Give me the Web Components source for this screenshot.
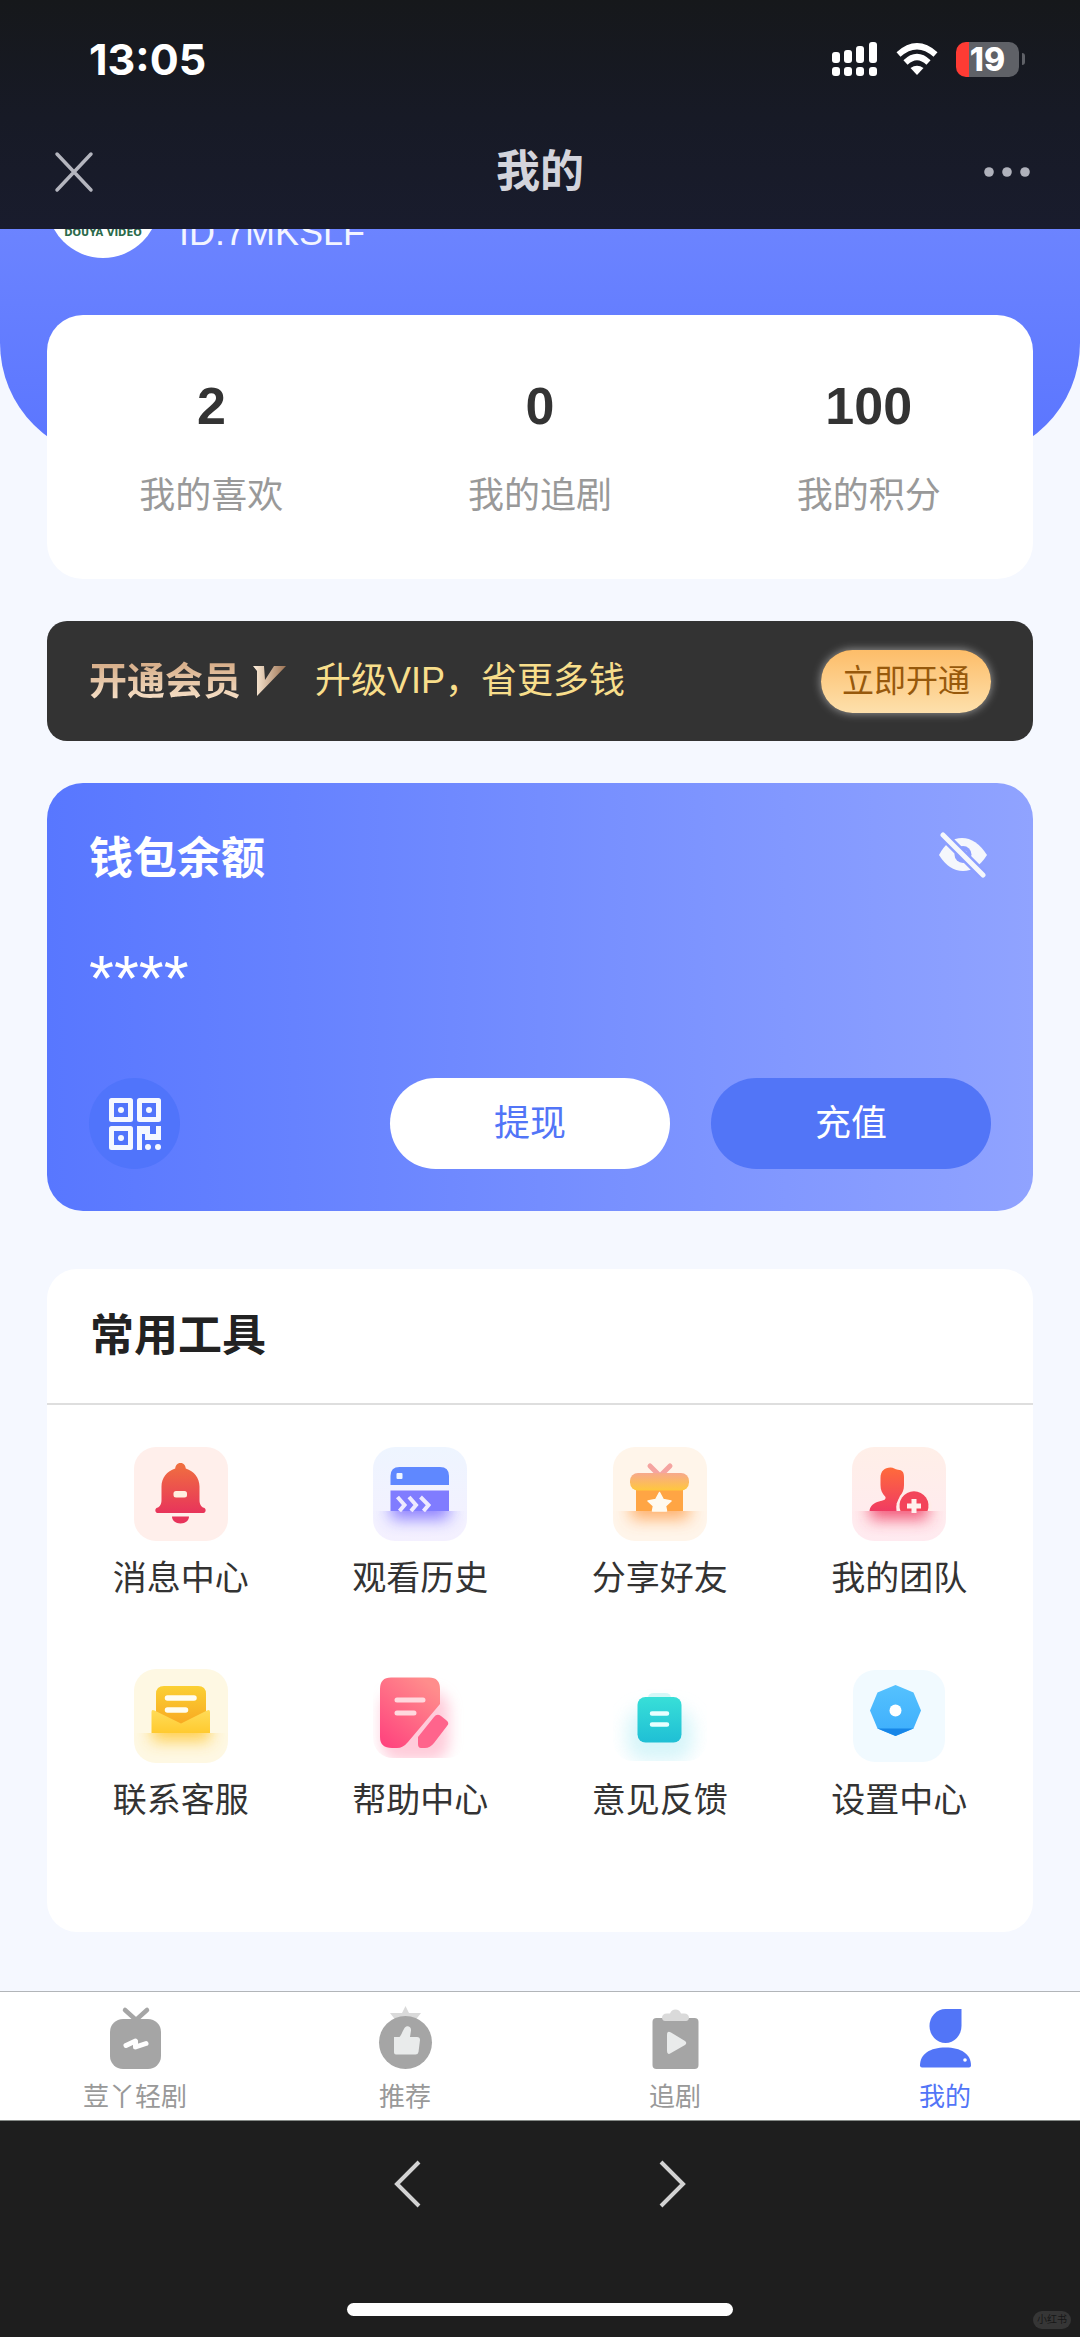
<!DOCTYPE html>
<html lang="zh-CN">
<head>
<meta charset="utf-8">
<meta name="viewport" content="width=device-width, initial-scale=1">
<title>我的</title>
<style>
  body {
    margin: 0;
    min-height: 100vh;
    display: flex;
    flex-direction: column;
    background: #f5f8ff;
    font-family: "Liberation Sans", "Noto Sans CJK SC", sans-serif;
    color: #333;
  }
  main {
    overflow: hidden;
    display: flex;
    flex-direction: column;
    padding-bottom: 59px;
  }
  .cards {
    display: flex;
    flex-direction: column;
    gap: 42px;
    margin: -144px 47px 0;
  }
  app-tools { margin-top: 16px; }
  app-footer { flex: 1; }
</style>
</head>
<body>
<status-bar time="13:05" battery="19"></status-bar>
<nav-header>我的</nav-header>
<main>
  <user-hero brand="DOUYA VIDEO">ID:7MKSLF</user-hero>
  <div class="cards">
    <stat-card>
      <stat-item value="2">我的喜欢</stat-item>
      <stat-item value="0">我的追剧</stat-item>
      <stat-item value="100">我的积分</stat-item>
    </stat-card>
    <vip-banner heading="开通会员" action="立即开通">升级VIP，省更多钱</vip-banner>
    <wallet-card heading="钱包余额" amount="****"></wallet-card>
    <app-tools heading="常用工具">
      <tool-item icon="bell">消息中心</tool-item>
      <tool-item icon="history">观看历史</tool-item>
      <tool-item icon="gift">分享好友</tool-item>
      <tool-item icon="team">我的团队</tool-item>
      <tool-item icon="contact">联系客服</tool-item>
      <tool-item icon="help">帮助中心</tool-item>
      <tool-item icon="feedback">意见反馈</tool-item>
      <tool-item icon="settings">设置中心</tool-item>
    </app-tools>
  </div>
</main>
<tab-bar>
  <tab-item icon="tv">荳丫轻剧</tab-item>
  <tab-item icon="like">推荐</tab-item>
  <tab-item icon="play">追剧</tab-item>
  <tab-item icon="me" active>我的</tab-item>
</tab-bar>
<app-footer badge="小红书"></app-footer>

<script>
const define = (name, render) => customElements.define(name, class extends HTMLElement {
  constructor() {
    super();
    const root = this.attachShadow({ mode: 'open' });
    const t = document.createElement('template');
    t.innerHTML = '<style>:host,*{box-sizing:border-box}svg{display:block;flex:none}button{border:0;padding:0;margin:0;background:none;font:inherit;color:inherit}a{color:inherit;text-decoration:none}</style>' + render(n => this.getAttribute(n) || '');
    root.append(t.content.cloneNode(true));
  }
});

const lin = (id, a, b, dir = 'x2="0" y2="1"') =>
  `<linearGradient id="${id}" ${dir}><stop stop-color="${a}"/><stop offset="1" stop-color="${b}"/></linearGradient>`;
const tile = c => `<rect width="94" height="94" rx="22" fill="${c}"/>`;
/* soft glow cast on the lower part of a tile, below the cut line at y=64 */
const glow = c => `<clipPath id="low"><path d="M0 64H94V72A22 22 0 0 1 72 94H22A22 22 0 0 1 0 72Z"/></clipPath>
  <filter id="soft" x="-50%" y="-80%" width="200%" height="260%"><feGaussianBlur stdDeviation="8"/></filter>
  <g clip-path="url(#low)"><rect x="18" y="48" width="58" height="24" fill="${c}" opacity=".85" filter="url(#soft)"/></g>`;

const toolIcons = {
  bell: `${lin('g', '#f0703f', '#e8345b')}${tile('#ffefeb')}
    <g fill="url(#g)"><path d="M46.500 16c3.500 0 5 2.500 5.300 5.500C60 24 65.500 31 65.500 39.500V53c0 4 1.500 7 4.500 7.800 2.500.8 2 5.200-.5 5.200h-46c-2.500 0-3-4.400-.5-5.200 3-.8 4.500-3.800 4.500-7.800V39.500C27.500 31 33 24 41.200 21.500 41.500 18.500 43 16 46.500 16Z"/></g>
    <path d="M38 69.500h17c0 4-3.500 7-8.500 7s-8.500-3-8.500-7Z" fill="#e8345b"/><rect x="39.500" y="44" width="13.500" height="6.500" rx="2.500" fill="#ffefdf"/>`,
  history: `${lin('g', '#eef5ff', '#f4f0ff')}${tile('url(#g)')}${glow('#7b6cff')}
    <path d="M17.500 38V29q0-9 9-9H67q9 0 9 9v9Z" fill="#5f88ff"/><path d="M17.500 43.500H76V64H17.500Z" fill="#807cff"/>
    <rect x="23.500" y="26" width="6" height="6" rx="1" fill="#eef5ff"/>
    <g fill="none" stroke="#eeeaff" stroke-width="4"><path d="M24.500 50l7 8-5 6M36 50l7 8-5 6M47.500 50l8 8-5 6"/></g>`,
  gift: `${lin('g', '#f7a98c', '#ffc83c')}${tile('#fff5ea')}${glow('#ffa352')}
    <path d="M37 19l9 9M57 19l-9 9" stroke="#f5a4a0" stroke-width="5" stroke-linecap="round"/>
    <path d="M23 40H70V64H23Z" fill="#ffa544"/><rect x="17" y="26" width="59" height="17.500" rx="8" fill="url(#g)"/>
    <path d="M46.500 45.500l3.800 7 7.700 1.500-5.500 5 1 5H39.500l1-5L35 54l7.700-1.500Z" fill="#fffaf0" stroke="#fffaf0" stroke-width="1.500" stroke-linejoin="round"/>`,
  team: `${lin('g', '#ff6b3b', '#f03b62')}${lin('b', '#ffefe8', '#ffeaf0')}${tile('url(#b)')}${glow('#f03b62')}
    <path d="M28.500 31c0-7 4-10.500 10-10.500 3 0 4.500 2.200 7.500 2.200 4.500 0 6 3 6 7.300v8c0 5-1.500 8-4 11-1.200 3 0 4.500 4 6L58 64H17.500c.5-5.500 4.500-8 9.500-9.500 4.500-1.300 7-1.500 6.500-4.500C30 46 28.500 43 28.500 38Z" fill="url(#g)"/>
    <path d="M44.500 64a17.800 17.800 0 1 1 35 0Z" fill="#ffece9"/><path d="M48.500 64a14.500 14.500 0 1 1 27 0Z" fill="#f3445a"/><path d="M62 52v14M55 59h14" stroke="#fff0ed" stroke-width="5"/>`,
  contact: `${lin('g', '#fbd034', '#f7a01d')}${lin('e', '#ffdc58', '#ffca2f')}${tile('#fef8e3')}${glow('#ffc736')}
    <path d="M22 64V25q0-8 8-8H64q8 0 8 8V64Z" fill="url(#g)"/>
    <path d="M17.500 43q0-3 3-1.500L47 54.500 73 41.500q3-1.500 3 1.500V64H17.500Z" fill="url(#e)"/>
    <path d="M33.500 29H60M33.500 41H51.500" stroke="#fffdf0" stroke-width="5.500" stroke-linecap="round"/>`,
  help: `${lin('g', '#ff8d8c', '#ff3f7d', 'x1=".7" y1="0" x2="0" y2="1"')}<filter id="s" x="-30%" y="-30%" width="160%" height="160%"><feGaussianBlur stdDeviation="7"/></filter>
    <clipPath id="c"><rect width="94" height="89" rx="20"/></clipPath><g clip-path="url(#c)"><rect x="8" y="22" width="68" height="70" rx="18" fill="#ffb6ca" opacity=".7" filter="url(#s)"/></g>
    <path d="M7 20Q7 8.500 18 8.500H56Q67 8.500 67 20V35L35 73Q30 79 24 79H19Q7 79 7 68Z" fill="url(#g)"/>
    <path d="M61 48q3-4 7-1l5 4q4 3 1 6L61 74q-4 5-9 5h-4q-3 0-3-4v-7Z" fill="#ff648c"/>
    <path d="M24 31H50M24 44H41" stroke="#ffd9de" stroke-width="5" stroke-linecap="round"/>`,
  feedback: `${lin('g', '#38dfd8', '#1fbfd5')}<filter id="s" x="-40%" y="-40%" width="180%" height="180%"><feGaussianBlur stdDeviation="9"/></filter>
    <clipPath id="c"><rect y="0" width="94" height="92" rx="20"/></clipPath><g clip-path="url(#c)"><rect x="14" y="40" width="66" height="52" rx="18" fill="#b5edf5" opacity=".55" filter="url(#s)"/></g>
    <path d="M35 29q0-5 6-5h11q6 0 6 5Z" fill="#d4f8f7"/><rect x="24.500" y="28" width="44" height="45.500" rx="8" fill="url(#g)"/>
    <path d="M39 44.500H54M39 55.500H54" stroke="#e8ffff" stroke-width="4.500" stroke-linecap="round"/>`,
  settings: `${lin('g', '#5cc8ff', '#31a3fb')}<rect x="1" y="1" width="92" height="92" rx="22" fill="#f1faff"/>
    <clipPath id="o"><path d="M43.500 16 61.500 23.500 69 41.500 61.500 59.500 43.500 67 25.500 59.500 18 41.500 25.500 23.500Z"/></clipPath>
    <g clip-path="url(#o)"><path d="M0 0H94V94H0Z" fill="url(#g)"/><path d="M0 59.500H94V94H0Z" fill="#1786e8"/></g>
    <circle cx="43.500" cy="41.500" r="6" fill="#fff"/>`
};

const tabIcons = {
  tv: `<path d="M20 6l11 10L42 6" fill="none" stroke="#a5a5a5" stroke-width="4.500" stroke-linecap="round"/><rect x="5" y="15" width="51" height="50" rx="13" fill="#a5a5a5"/><path d="M21 41.500L30.500 37V43L41 39.500" fill="none" stroke="#fff" stroke-width="5" stroke-linecap="round" stroke-linejoin="round"/>`,
  like: `<path d="M15 9l12 0 3.500-7 3.500 7 12 0-7 9H22Z" fill="#dadada"/><circle cx="30.500" cy="38.500" r="26.500" fill="#a5a5a5"/><path d="M19 33h5.500c2-2 3-6 5-9 2-3 7-2 6.500 2.500L35 33h7q3 0 3 3l-1.500 12q-.5 2.500-3 2.500H21q-2 0-2-2Z" fill="#e9ebeb"/>`,
  play: `<rect x="7.500" y="14" width="46" height="51" rx="4" fill="#a5a5a5"/><path d="M17 14q0-5 6-4.500h2q1.500-4 5.500-4t5.500 4h2q6-.5 6 4.500-.5 3-3 3H20q-2.500 0-3-3Z" fill="#dadada"/><path d="M22 31q0-5 4-2.500l14 8.500q2.500 2 0 4L26 49q-4 2.500-4-2Z" fill="#e9ebeb"/>`,
  me: `<path d="M46.500 5V22A16 17 0 1 1 30.500 5Z" fill="#5275f7"/><path d="M5 61.500C5 50 15 43.500 30.500 43.500S56 50 56 61.500q0 2-2 2H7q-2 0-2-2Z" fill="#5275f7"/><circle cx="50" cy="56" r="1.800" fill="#fff"/>`
};

define('status-bar', a => `
<style>
  :host{display:flex;justify-content:space-between;align-items:center;height:118px;padding:0 55px 0 89px;background:linear-gradient(#16181b,#171a26);color:#fff}
  time{font:700 43px/48px Inter,sans-serif}
  .icons{display:flex;align-items:center;gap:18px}
  .battery{display:flex;align-items:center;gap:3px}
  .cell{width:63px;height:35px;border-radius:10px;background:linear-gradient(90deg,#ff3b34 13px,#5f6167 13px);font:800 32px/35px Inter,sans-serif;text-align:center}
  .nub{width:3px;height:12px;border-radius:0 3px 3px 0;background:#5f6167}
</style>
<time>${a('time')}</time>
<div class="icons">
  <svg width="46" height="34" fill="#fff" aria-hidden="true"><rect y="10" width="8" height="11" rx="3"/><rect x="12" y="8" width="8" height="13" rx="3"/><rect x="24" y="4" width="8" height="17" rx="3"/><rect x="37" width="8" height="21" rx="3"/><rect y="25" width="8" height="9" rx="3"/><rect x="12" y="25" width="8" height="9" rx="3"/><rect x="24" y="25" width="8" height="9" rx="3"/><rect x="37" y="25" width="8" height="9" rx="3"/></svg>
  <svg width="42" height="32" aria-hidden="true"><g fill="none" stroke="#fff" stroke-width="6"><path d="M2.500 11.500Q21-5 39.500 11.500"/><path d="M9.500 19.500Q21 8.500 32.500 19.500"/></g><path d="M14.500 25Q21 20.500 27.500 25L21 32Z" fill="#fff"/></svg>
  <div class="battery"><div class="cell">${a('battery')}</div><div class="nub"></div></div>
</div>`);

define('nav-header', () => `
<style>
  :host{display:grid;grid-template-columns:1fr auto 1fr;align-items:center;height:111px;padding:0 50px 4px;background:linear-gradient(#171a26,#191c2d);color:#d3d4dc}
  h1{margin:0;font-size:44px;font-weight:700;line-height:60px}
  button{display:flex}
  .more{justify-self:end}
</style>
<button aria-label="关闭"><svg width="48" height="48" stroke="#b4b5be" stroke-width="3.500" stroke-linecap="round"><path d="M7 6L41 42M41 6L7 42"/></svg></button>
<h1><slot></slot></h1>
<button class="more" aria-label="更多"><svg width="48" height="12" fill="#b0b2bc"><circle cx="7" cy="6" r="4.800"/><circle cx="25" cy="6" r="4.800"/><circle cx="43" cy="6" r="4.800"/></svg></button>`);

define('user-hero', a => `
<style>
  :host{display:flex;align-items:flex-start;gap:20px;margin-top:-83px;padding:0 47px 201px;border-radius:0 0 116px 116px;background:linear-gradient(#7289ff,#5a75ff)}
  .avatar,.id{height:112px;display:flex;align-items:flex-end}
  .avatar{width:112px;border-radius:50%;background:#fff;justify-content:center;padding-bottom:20px;color:#2b6a4b;font:700 10px/10px "DejaVu Sans",sans-serif;white-space:nowrap}
  .id{padding-bottom:5px;color:#f3f5ff;font-size:36px;line-height:40px}
</style>
<div class="avatar">${a('brand')}</div>
<div class="id"><slot></slot></div>`);

define('stat-card', () => `
<style>:host{display:flex;padding:61px 0 58px;border-radius:36px;background:#fff}::slotted(*){flex:1}</style><slot></slot>`);

define('stat-item', a => `
<style>
  :host{display:flex;flex-direction:column;align-items:center;gap:35px}
  b{font-size:52px;line-height:60px;color:#333}
  span{font-size:36px;line-height:50px;color:#999}
</style>
<b>${a('value')}</b><span><slot></slot></span>`);

define('vip-banner', a => `
<style>
  :host{display:flex;align-items:center;height:120px;padding:0 42px;border-radius:20px;background:#333}
  strong{font-size:38px;font-weight:700;line-height:52px;color:transparent;background:linear-gradient(#d8b08c 10px,#f4dcc2 42px);background-clip:text;-webkit-background-clip:text}
  svg{margin:0 28px 0 12px}
  p{flex:1;margin:0;font-size:36px;line-height:50px;color:#f8de8b}
  button{padding:0 21px;height:63px;border-radius:32px;background:linear-gradient(#fdbd69,#fde0ac);box-shadow:0 0 10px #fff8;font-size:32px;line-height:60px;color:#97590c}
</style>
<strong>${a('heading')}</strong>
<svg width="34" height="32" viewBox="0 0 34 32"><defs>${lin('g', '#fff0dc', '#9d7353', 'x2="1" y2="0"')}</defs><path d="M0 1H11L12 15 21 1H33L4 31 4 6Z" fill="url(#g)"/></svg>
<p><slot></slot></p>
<button>${a('action')}</button>`);

define('wallet-card', a => `
<style>
  :host{display:flex;flex-direction:column;padding:46px 42px 42px;border-radius:36px;background:linear-gradient(90deg,#5877ff,#90a3ff);color:#fff}
  .top,.actions{display:flex;align-items:center}
  .top{justify-content:space-between}
  h2{margin:0;font-size:44px;font-weight:700;line-height:60px}
  .eye{padding:0 3px 8px 0}
  .amount{margin:53px 0 61px;font-size:64px;line-height:75px}
  .qr{width:91px;height:91px;border-radius:50%;background:#5074fb;display:flex;align-items:center;justify-content:center;margin-right:auto}
  .pill{flex:0 1 280px;height:91px;border-radius:46px;font-size:36px;line-height:90px;background:#5275f7}
  .out{background:#fff;color:#5275f7;margin-right:41px}
</style>
<div class="top"><h2>${a('heading')}</h2>
<button class="eye" aria-label="显示余额"><svg width="50" height="46" viewBox="0 0 50 46"><path d="M1 23Q10 6 24 6T49 23Q39 39 25 39T1 23Z" fill="#f5f7fc"/><circle cx="25" cy="22.500" r="8.500" fill="#8b9eff"/><circle cx="25" cy="22.500" r="4.500" fill="#f5f7fc"/><path d="M5 3L45 43" stroke="#8b9eff" stroke-width="10"/><path d="M5 3L45 43" stroke="#f5f7fc" stroke-width="5" stroke-linecap="round"/></svg></button></div>
<div class="amount">${a('amount')}</div>
<div class="actions">
  <button class="qr" aria-label="二维码"><svg width="54" height="54" viewBox="0 0 54 54"><g fill="none" stroke="#f5f8ff" stroke-width="5" stroke-linejoin="round"><rect x="3.500" y="3.500" width="19" height="19"/><rect x="31.500" y="3.500" width="19" height="19"/><rect x="3.500" y="31.500" width="19" height="19"/></g><g fill="#f5f8ff"><circle cx="13" cy="13" r="3"/><circle cx="41" cy="13" r="3"/><circle cx="13" cy="41" r="3"/><path d="M29 29H42V37H48V29H53V43H37V37H34V53H29Z"/><circle cx="40" cy="50" r="3"/><circle cx="50" cy="50" r="3"/></g></svg></button>
  <button class="pill out">提现</button>
  <button class="pill">充值</button>
</div>`);

define('app-tools', a => `
<style>
  :host{display:block;border-radius:30px;background:#fff}
  h2{margin:0;padding:35px 43px;border-bottom:2px solid #dedede;font-size:44px;font-weight:700;line-height:64px;color:#222}
  nav{display:grid;grid-template-columns:repeat(4,1fr);row-gap:58px;padding:42px 14px 99px}
</style>
<h2>${a('heading')}</h2><nav><slot></slot></nav>`);

define('tool-item', a => `
<style>
  :host{display:block}
  a{display:flex;flex-direction:column;align-items:center;gap:12px;font-size:34px;line-height:50px;padding-bottom:8px;color:#333}
</style>
<a href="#${a('icon')}"><svg width="94" height="94" viewBox="0 0 94 94" aria-hidden="true">${toolIcons[a('icon')]}</svg><span><slot></slot></span></a>`);

define('tab-bar', () => `
<style>:host{display:flex;border-top:1px solid #b2b5b9;border-bottom:1px solid #858a87;background:#fff}::slotted(*){flex:1}</style><slot></slot>`);

define('tab-item', a => `
<style>
  :host{display:block}
  a{display:flex;flex-direction:column;align-items:center;gap:9px;padding:12px 0 5px;font-size:26px;line-height:36px;color:#999}
  :host([active]) a{color:#5275f7}
</style>
<a href="#${a('icon')}"><svg width="61" height="66" viewBox="0 0 61 66" aria-hidden="true">${tabIcons[a('icon')]}</svg><span><slot></slot></span></a>`);

define('app-footer', a => `
<style>
  :host{position:relative;display:flex;flex-direction:column;align-items:center;justify-content:space-between;padding:35px 0 21px;background:#1e1e1e}
  nav{display:flex;gap:216px}
  button{display:flex}
  .home{width:386px;height:13px;border-radius:7px;background:#fff}
  .badge{position:absolute;right:9px;bottom:8px;padding:0 4px;border-radius:9px;background:#363636;color:#171717;font-size:10px;line-height:18px}
</style>
<nav>
<button aria-label="后退"><svg width="48" height="56" fill="none" stroke="#d2d2d2" stroke-width="4"><path d="M35 6L13 28 35 50"/></svg></button>
<button aria-label="前进"><svg width="48" height="56" fill="none" stroke="#d2d2d2" stroke-width="4"><path d="M13 6L35 28 13 50"/></svg></button>
</nav>
<div class="home"></div>
<span class="badge">${a('badge')}</span>`);
</script>
</body>
</html>
